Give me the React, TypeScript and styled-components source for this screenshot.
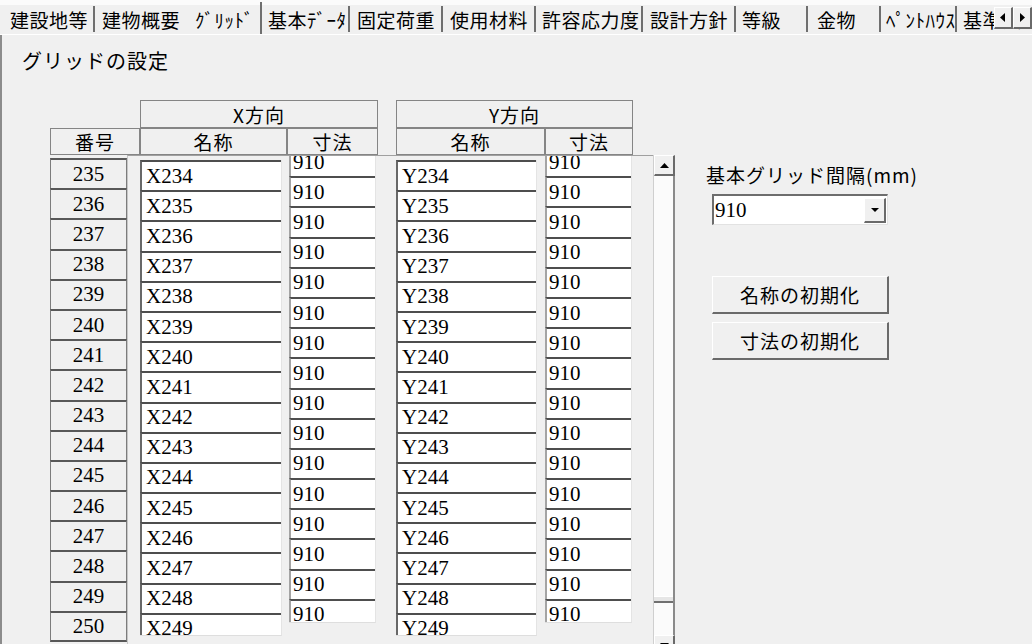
import styled, { createGlobalStyle } from "styled-components";

const UI = '"Noto Sans CJK JP", "Noto Sans", sans-serif';
const SERIF = '"Liberation Serif", "Noto Sans CJK JP", serif';

const tabs = [
  { label: "建設地等", width: 95, pad: 10 },
  { label: "建物概要", width: 88, sep: false },
  { label: "ｸﾞﾘｯﾄﾞ", width: 79, pad: 12, active: true },
  { label: "基本ﾃﾞｰﾀ", width: 88, pad: 6 },
  { label: "固定荷重", width: 93 },
  { label: "使用材料", width: 93 },
  { label: "許容応力度", width: 107, pad: 6 },
  { label: "設計方針", width: 93 },
  { label: "等級", width: 72, pad: 6 },
  { label: "金物", width: 73, pad: 9 },
  { label: "ﾍﾟﾝﾄﾊｳｽ", width: 76, pad: 5 },
  { label: "基準法", width: 90, pad: 6 },
];

const numbers = Array.from({ length: 16 }, (_, i) => 235 + i);
const xNames = Array.from({ length: 16 }, (_, i) => `X${234 + i}`);
const yNames = Array.from({ length: 16 }, (_, i) => `Y${234 + i}`);
const sizes = Array.from({ length: 16 }, () => "910");

export default function App() {
  return (
    <>
      <GlobalStyle />
      <Window>
        <TabStrip>
          {tabs.map((t) => (
            <Tab key={t.label} $w={t.width} $pad={t.pad} $active={t.active} $sep={t.sep}>
              {t.label}
            </Tab>
          ))}
          <TabArrows>
            <ArrowBtn>
              <svg width="6" height="9" viewBox="0 0 6 9"><path d="M5 0 L0 4.5 L5 9 Z" fill="#000" /></svg>
            </ArrowBtn>
            <ArrowBtn>
              <svg width="6" height="9" viewBox="0 0 6 9"><path d="M1 0 L6 4.5 L1 9 Z" fill="#000" /></svg>
            </ArrowBtn>
          </TabArrows>
        </TabStrip>

        <TabPage>
          <Title>グリッドの設定</Title>
          <Main>
            <GridArea>
              <HeaderRow>
                <HeadGrid $cols="90px 147px 91px">
                  <HeadCell $col="2 / 4" $row="1">X方向</HeadCell>
                  <HeadCell $col="1" $row="2">番号</HeadCell>
                  <HeadCell $col="2" $row="2">名称</HeadCell>
                  <HeadCell $col="3" $row="2">寸法</HeadCell>
                </HeadGrid>
                <HeadGrid $cols="149px 88px">
                  <HeadCell $col="1 / 3" $row="1">Y方向</HeadCell>
                  <HeadCell $col="1" $row="2">名称</HeadCell>
                  <HeadCell $col="2" $row="2">寸法</HeadCell>
                </HeadGrid>
              </HeaderRow>

              <Body>
                <NumberCol>
                  {numbers.map((n) => (
                    <NumCell key={n}>{n}</NumCell>
                  ))}
                </NumberCol>

                <InnerFrame>
                  <Column $w={142} $h={476} $top={4} $ml={0}>
                    {xNames.map((n) => (
                      <FieldCell key={n} $kind="name">{n}</FieldCell>
                    ))}
                  </Column>
                  <Column $w={87} $h={467} $top={0} $ml={7}>
                    <CellList $shift={-10}>
                      {sizes.map((s, i) => (
                        <FieldCell key={i} $kind="size">{s}</FieldCell>
                      ))}
                    </CellList>
                  </Column>
                  <Column $w={141} $h={476} $top={4} $ml={20}>
                    {yNames.map((n) => (
                      <FieldCell key={n} $kind="name">{n}</FieldCell>
                    ))}
                  </Column>
                  <Column $w={87} $h={467} $top={0} $ml={8}>
                    <CellList $shift={-10}>
                      {sizes.map((s, i) => (
                        <FieldCell key={i} $kind="size">{s}</FieldCell>
                      ))}
                    </CellList>
                  </Column>
                </InnerFrame>

                <ScrollBar>
                  <ScrollBtn>
                    <svg width="9" height="5" viewBox="0 0 9 5"><path d="M0 5 L4.5 0 L9 5 Z" fill="#000" /></svg>
                  </ScrollBtn>
                  <Track>
                    <Thumb />
                  </Track>
                  <ScrollBtn>
                    <svg width="9" height="5" viewBox="0 0 9 5"><path d="M0 0 L4.5 5 L9 0 Z" fill="#000" /></svg>
                  </ScrollBtn>
                </ScrollBar>
              </Body>
            </GridArea>

            <Side>
              <SideLabel>基本グリッド間隔(mm)</SideLabel>
              <Combo>
                <ComboText>910</ComboText>
                <ComboBtn>
                  <svg width="8" height="4" viewBox="0 0 8 4"><path d="M0 0 L4 4 L8 0 Z" fill="#000" /></svg>
                </ComboBtn>
              </Combo>
              <ActionButton $mt={51}>名称の初期化</ActionButton>
              <ActionButton $mt={8}>寸法の初期化</ActionButton>
            </Side>
          </Main>
        </TabPage>
      </Window>
    </>
  );
}

const GlobalStyle = createGlobalStyle`
  html, body {
    margin: 0;
    padding: 0;
    background: #f0f0f0;
    overflow: hidden;
  }
  body {
    font-family: ${UI};
    color: #000;
  }
  * {
    box-sizing: border-box;
  }
`;

const Window = styled.div`
  width: 1032px;
  height: 644px;
  overflow: hidden;
  background: #f0f0f0;
  display: flex;
  flex-direction: column;
`;

const TabStrip = styled.div`
  position: relative;
  flex: none;
  height: 35px;
  display: flex;
  align-items: flex-end;
  background: linear-gradient(#fbfbfb 0 5px, #f0f0f0 5px);
  border-bottom: 1px solid #ffffff;
  overflow: hidden;
`;

const Tab = styled.div<{ $w: number; $pad?: number; $active?: boolean; $sep?: boolean }>`
  flex: none;
  width: ${(p) => p.$w}px;
  height: ${(p) => (p.$active ? 32 : 26)}px;
  margin-bottom: ${(p) => (p.$active ? 0 : 2)}px;
  padding-left: ${(p) => p.$pad ?? 7}px;
  padding-top: ${(p) => (p.$active ? 3 : 0)}px;
  display: flex;
  align-items: center;
  font-size: 19px;
  letter-spacing: 0.5px;
  white-space: nowrap;
  overflow: hidden;
  border-right: 2px solid ${(p) => (p.$sep === false ? "transparent" : "#6f6f6f")};
`;

const TabArrows = styled.div`
  position: absolute;
  right: 0;
  top: 7px;
  display: flex;
  background: #f0f0f0;
`;

const ArrowBtn = styled.div`
  width: 19px;
  height: 22px;
  display: flex;
  align-items: center;
  justify-content: center;
  background: #f0f0f0;
  border-top: 1px solid #ffffff;
  border-left: 1px solid #ffffff;
  border-right: 2px solid #6a6a6a;
  border-bottom: 2px solid #6a6a6a;
`;

const TabPage = styled.div`
  flex: 1;
  border-left: 2px solid #8c8c8c;
`;

const Title = styled.div`
  margin: 14px 0 0 20px;
  font-size: 20px;
  line-height: 24px;
  letter-spacing: 1px;
`;

const Main = styled.div`
  display: flex;
  margin-top: 27px;
  padding-left: 48px;
`;

const GridArea = styled.div`
  display: flex;
  flex-direction: column;
`;

const HeaderRow = styled.div`
  display: flex;
  gap: 18px;
  align-items: flex-start;
`;

const HeadGrid = styled.div<{ $cols: string }>`
  display: grid;
  grid-template-columns: ${(p) => p.$cols};
  grid-template-rows: 28px 27px;
`;

const HeadCell = styled.div<{ $col: string; $row: string }>`
  grid-column: ${(p) => p.$col};
  grid-row: ${(p) => p.$row};
  border: 1px solid #858585;
  background: #f0f0f0;
  display: flex;
  align-items: center;
  justify-content: center;
  font-size: 19px;
  line-height: 1;
  letter-spacing: 1px;
`;

const Body = styled.div`
  display: flex;
  align-items: flex-start;
  height: 500px;
`;

const NumberCol = styled.div`
  width: 77px;
  padding-top: 3px;
  display: flex;
  flex-direction: column;
`;

const NumCell = styled.div`
  flex: none;
  height: 30.2px;
  border: 1px solid #7c7c7c;
  border-top: 2px solid #585858;
  background: #f0f0f0;
  display: flex;
  align-items: center;
  justify-content: center;
  font-family: ${SERIF};
  font-size: 21px;

  & + & {
    border-bottom: none;
  }
  &:not(:last-child) {
    border-bottom: none;
  }
  &:last-child {
    height: 31px;
    border-bottom: 2px solid #585858;
  }
`;

const InnerFrame = styled.div`
  width: 526px;
  height: 500px;
  display: flex;
  align-items: flex-start;
  padding-left: 12px;
  border-top: 1px solid #a0a0a0;
  border-left: 1px solid #c6c6c6;
`;

const Column = styled.div<{ $w: number; $h: number; $top: number; $ml: number }>`
  flex: none;
  width: ${(p) => p.$w}px;
  height: ${(p) => p.$h}px;
  margin-top: ${(p) => p.$top}px;
  margin-left: ${(p) => p.$ml}px;
  overflow: hidden;
  display: flex;
  flex-direction: column;
  border-bottom: 1px solid #dedede;
  border-right: 1px solid #e4e4e4;
`;

const CellList = styled.div<{ $shift: number }>`
  display: flex;
  flex-direction: column;
  margin-top: ${(p) => p.$shift}px;
`;

const FieldCell = styled.div<{ $kind: "name" | "size" }>`
  flex: none;
  height: 30.2px;
  background: #ffffff;
  border-top: 2px solid #4e4e4e;
  border-left: 2px solid ${(p) => (p.$kind === "name" ? "#686868" : "#a4a4a4")};
  padding-left: ${(p) => (p.$kind === "name" ? 4 : 2)}px;
  display: flex;
  align-items: center;
  font-family: ${SERIF};
  font-size: 21px;
`;

const ScrollBar = styled.div`
  width: 22px;
  display: flex;
  flex-direction: column;
  border-left: 1px solid #cfcfcf;
`;

const ScrollBtn = styled.div`
  flex: none;
  height: 21px;
  display: flex;
  align-items: center;
  justify-content: center;
  background: #f0f0f0;
  border-top: 1px solid #ffffff;
  border-left: 1px solid #ffffff;
  border-right: 2px solid #6a6a6a;
  border-bottom: 2px solid #6a6a6a;
`;

const Track = styled.div`
  height: 459px;
  background: #fbfbfb;
  border-right: 2px solid #8a8a8a;
  display: flex;
  flex-direction: column;
  justify-content: flex-end;
  padding-bottom: 32px;
`;

const Thumb = styled.div`
  height: 7px;
  background: #e6e6e6;
  border-top: 1px solid #ffffff;
  border-bottom: 2px solid #707070;
`;

const Side = styled.div`
  margin-left: 31px;
  padding-top: 64px;
  display: flex;
  flex-direction: column;
`;

const SideLabel = styled.div`
  font-size: 19px;
  line-height: 22px;
  letter-spacing: 1px;
  white-space: nowrap;
`;

const Combo = styled.div`
  margin: 8px 0 0 6px;
  width: 176px;
  height: 31px;
  display: flex;
  align-items: center;
  background: #ffffff;
  border-top: 2px solid #6d6d6d;
  border-left: 2px solid #6d6d6d;
  border-right: 1px solid #e2e2e2;
  border-bottom: 1px solid #e2e2e2;
  padding-right: 1px;
`;

const ComboText = styled.div`
  flex: 1;
  padding-left: 1px;
  font-family: ${SERIF};
  font-size: 21px;
`;

const ComboBtn = styled.div`
  width: 22px;
  height: 25px;
  display: flex;
  align-items: center;
  justify-content: center;
  background: #f0f0f0;
  border-top: 1px solid #ffffff;
  border-left: 1px solid #ffffff;
  border-right: 2px solid #6a6a6a;
  border-bottom: 2px solid #6a6a6a;
`;

const ActionButton = styled.div<{ $mt: number }>`
  margin: ${(p) => p.$mt}px 0 0 6px;
  width: 177px;
  height: 38px;
  display: flex;
  align-items: center;
  justify-content: center;
  background: #f0f0f0;
  border-top: 1px solid #ffffff;
  border-left: 1px solid #ffffff;
  border-right: 2px solid #6a6a6a;
  border-bottom: 2px solid #6a6a6a;
  font-size: 19px;
  letter-spacing: 1px;
`;
